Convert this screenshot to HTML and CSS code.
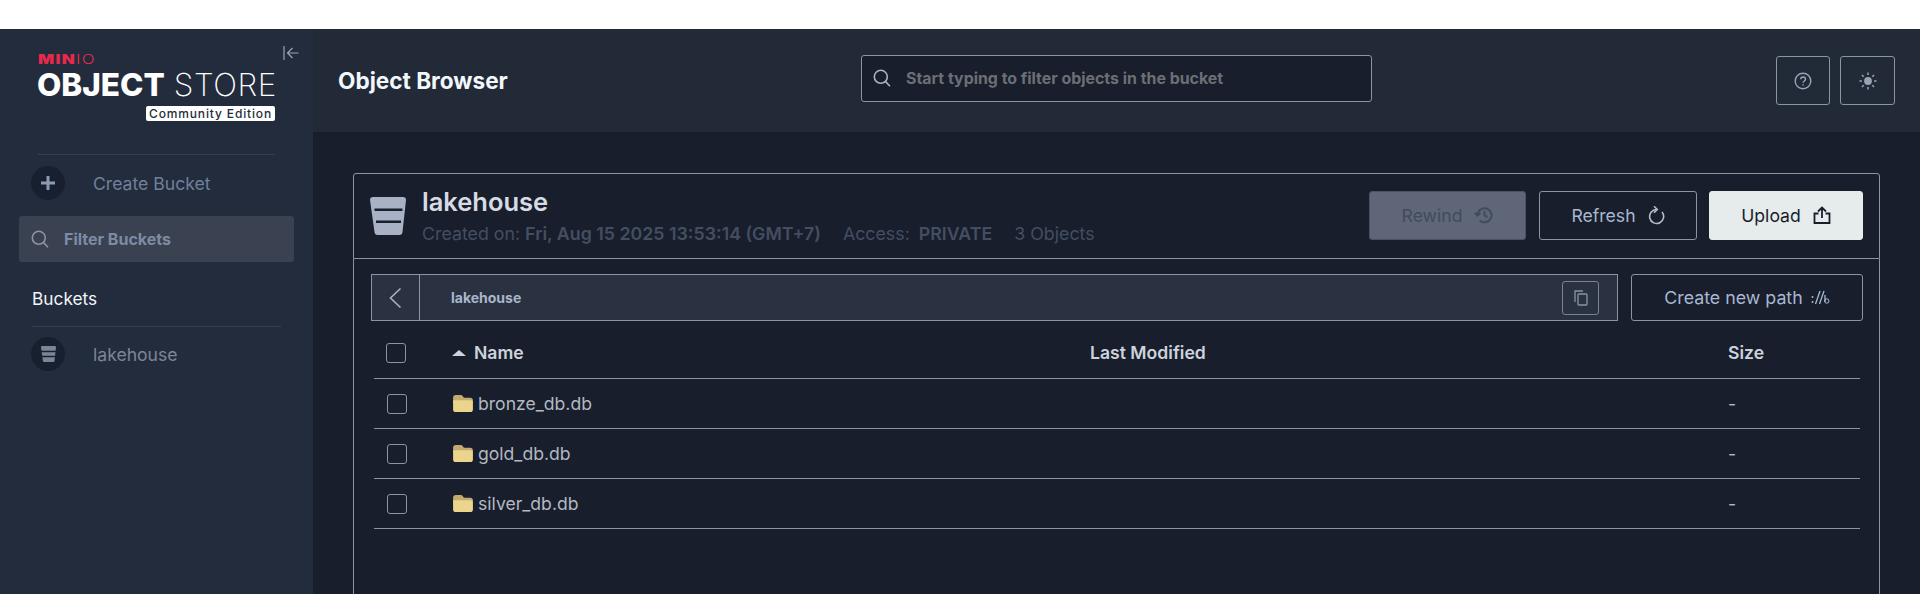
FILE: index.html
```html
<!DOCTYPE html>
<html lang="en">
<head>
    <meta charset="UTF-8">
    <meta name="viewport" content="width=device-width, initial-scale=1.0">
    <title>Object Browser</title>
    <link rel="stylesheet" href="styles.css">
</head>
<body>
    <div class="top-strip"></div>
    <div class="app">
        <aside class="sidebar">
            <button class="collapse" aria-label="Collapse">
                <svg width="16" height="16" viewBox="0 0 16 16" fill="none" stroke="#9ba3b2" stroke-width="1.2"><path d="M1 1v14"/><path d="M15.500 8H4.500M9.500 3l-5 5 5 5"/></svg>
            </button>
            <div class="logo">
                <div class="logo-minio"><b>MIN</b>IO</div>
                <div class="logo-name"><b>OBJECT</b> <span class="logo-store">STORE</span></div>
                <div class="logo-edition"><span>Community Edition</span></div>
            </div>
            <div class="side-row side-row-create">
                <span class="side-circle">
                    <svg width="16" height="16" viewBox="0 0 16 16" fill="none" stroke="#8e9ab0" stroke-width="3"><path d="M8 1v14M1 8h14"/></svg>
                </span>
                <span class="side-label side-label-create">Create Bucket</span>
            </div>
            <div class="filter-box">
                <svg width="18" height="18" viewBox="0 0 18 18" fill="none" stroke="#8c94a3" stroke-width="1.600"><circle cx="7.800" cy="7.800" r="6.500"/><path d="M12.600 12.600l4.400 4.600"/></svg>
                <span>Filter Buckets</span>
            </div>
            <div class="buckets-title">Buckets</div>
            <div class="side-row side-row-bucket">
                <span class="side-circle">
                    <svg width="15" height="16" viewBox="0 0 36 38"><path fill="#7c8598" d="M0 3q0-3 3-3h30q3 0 3 3l-3.500 32q-.3 3-3 3H7.500q-2.700 0-3-3z"/><path fill="#182030" d="M0 11h36v3.500H0zM0 23h36v3.500H0z"/></svg>
                </span>
                <span class="side-label">lakehouse</span>
            </div>
        </aside>

        <div class="main">
            <header class="topbar">
                <h1 class="page-title">Object Browser</h1>
                <div class="search">
                    <svg width="18" height="18" viewBox="0 0 18 18" fill="none" stroke="#a9b3c4" stroke-width="1.600"><circle cx="7.800" cy="7.800" r="6.500"/><path d="M12.600 12.600l4.400 4.600"/></svg>
                    <span>Start typing to filter objects in the bucket</span>
                </div>
                <div class="top-actions">
                    <button class="icon-btn icon-btn-help" aria-label="Help">
                        <svg width="18" height="18" viewBox="0 0 18 18" fill="none" stroke="#98a3b5" stroke-width="1.400"><circle cx="9" cy="9" r="7.800"/><path d="M6.700 7.200c0-3 4.800-3 4.800 0 0 1.800-2.400 1.800-2.400 3.600"/><path d="M9.100 12.200v1.400"/></svg>
                    </button>
                    <button class="icon-btn icon-btn-theme" aria-label="Theme">
                        <svg width="18" height="18" viewBox="0 0 18 18" fill="#98a3b5" stroke="#98a3b5" stroke-width="1.500"><circle cx="9" cy="9" r="3.900" stroke="none"/><path d="M9 .5v2.400M9 15.100v2.400M.5 9h2.400M15.100 9h2.400M3 3l1.700 1.700M13.300 13.300L15 15M3 15l1.700-1.700M13.300 4.700L15 3"/></svg>
                    </button>
                </div>
            </header>

            <div class="content">
                <section class="panel-head">
                    <svg class="bucket-icon" width="36" height="38" viewBox="0 0 36 38"><path fill="#a9b2c4" d="M0 3q0-3 3-3h30q3 0 3 3l-3.500 32q-.3 3-3 3H7.500q-2.700 0-3-3z"/><path fill="#181e2b" d="M4.500 11.500h28v2.500h-28zM6 23.500h25v2.500H6z"/></svg>
                    <div class="bucket-info">
                        <div class="bucket-name">lakehouse</div>
                        <div class="bucket-meta">
                            <span>Created on: <b>Fri, Aug 15 2025 13:53:14 (GMT+7)</b></span>
                            <span>Access: <b class="access">PRIVATE</b></span>
                            <span>3 Objects</span>
                        </div>
                    </div>
                    <div class="head-actions">
                        <button class="btn btn-disabled btn-rewind">Rewind
                            <svg width="19" height="18" viewBox="0 0 19 18" fill="none" stroke="#414b5d" stroke-width="2"><path d="M3.500 9a7 7 0 1 1 2.200 5.400"/><path d="M.8 6.800l2.700 2.900 2.900-2.700"/><path d="M10.500 5v4.500l3 1.500"/></svg>
                        </button>
                        <button class="btn btn-outline btn-refresh">Refresh
                            <svg width="17" height="20" viewBox="0 0 17 20" fill="none" stroke="#b4bccb" stroke-width="1.600"><path d="M14 7A7 7 0 1 1 8.500 4.500"/><path d="M6 1.200L9.300 4.500 6 7.800"/></svg>
                        </button>
                        <button class="btn btn-light btn-upload">Upload
                            <svg width="18" height="18" viewBox="0 0 18 18" fill="none" stroke="#181e2b" stroke-width="1.800"><path d="M9 12V2M5 5.500L9 1.500l4 4"/><path d="M5.500 7.500H1.500v9.500h15V7.500h-4"/></svg>
                        </button>
                    </div>
                </section>

                <section class="panel-body">
                    <div class="path-row">
                        <div class="path-bar">
                            <span class="path-back">
                                <svg width="14" height="22" viewBox="0 0 14 22" fill="none" stroke="#aab2c2" stroke-width="1.600"><path d="M11.500 1.500L1.500 11l10 9.500"/></svg>
                            </span>
                            <span class="path-name">lakehouse</span>
                            <span class="path-copy">
                                <svg width="14" height="16" viewBox="0 0 14 16" fill="none" stroke="#8a94a6" stroke-width="1.300"><path d="M1 12V1h8"/><rect x="4" y="4" width="9" height="11" rx="1"/></svg>
                            </span>
                        </div>
                        <button class="btn btn-outline btn-path">Create new path
                            <svg width="19" height="15" viewBox="0 0 19 15" fill="none" stroke="#a9b8d2" stroke-width="1.300"><circle cx="1.500" cy="7" r="1" fill="#a9b8d2" stroke="none"/><circle cx="1.500" cy="12" r="1" fill="#a9b8d2" stroke="none"/><path d="M4.500 14L9 1M8.500 14L13 1"/><path d="M14 5v7"/><circle cx="15.800" cy="11" r="2.200" stroke-width="1"/></svg>
                        </button>
                    </div>

                    <div class="table">
                        <div class="table-row table-head">
                            <span class="check check-head"></span>
                            <span class="col-name"><i class="sort-arrow"></i>Name</span>
                            <span>Last Modified</span>
                            <span>Size</span>
                        </div>
                        <div class="table-row">
                            <span class="check"></span>
                            <span class="col-name"><svg class="folder" width="20" height="17" viewBox="0 0 21 18"><path fill="#c2ab70" d="M0 3q0-3 3-3h5q1.500 0 2.500 1.500L11.500 3H18q3 0 3 3v2H0z"/><path fill="#ebd48c" d="M0 5.500h18q3 0 3 2.500v7q0 3-3 3H3q-3 0-3-3z"/></svg>bronze_db.db</span>
                            <span></span>
                            <span>-</span>
                        </div>
                        <div class="table-row">
                            <span class="check"></span>
                            <span class="col-name"><svg class="folder" width="20" height="17" viewBox="0 0 21 18"><path fill="#c2ab70" d="M0 3q0-3 3-3h5q1.500 0 2.500 1.500L11.500 3H18q3 0 3 3v2H0z"/><path fill="#ebd48c" d="M0 5.500h18q3 0 3 2.500v7q0 3-3 3H3q-3 0-3-3z"/></svg>gold_db.db</span>
                            <span></span>
                            <span>-</span>
                        </div>
                        <div class="table-row">
                            <span class="check"></span>
                            <span class="col-name"><svg class="folder" width="20" height="17" viewBox="0 0 21 18"><path fill="#c2ab70" d="M0 3q0-3 3-3h5q1.500 0 2.500 1.500L11.500 3H18q3 0 3 3v2H0z"/><path fill="#ebd48c" d="M0 5.500h18q3 0 3 2.500v7q0 3-3 3H3q-3 0-3-3z"/></svg>silver_db.db</span>
                            <span></span>
                            <span>-</span>
                        </div>
                    </div>
                </section>
            </div>
        </div>
    </div>
</body>
</html>
```
FILE: styles.css
```css
* {
    box-sizing: border-box;
}

html, body {
    height: 100%;
    overflow: hidden;
}

body {
    margin: 0;
    background-color: #fff;
    font-family: Inter, "Liberation Sans", sans-serif;
}

button {
    font-family: inherit;
    cursor: pointer;
}

.top-strip {
    height: 29px;
    background-color: #fff;
}

.app {
    display: flex;
    height: 565px;
    overflow: hidden;
}

/* sidebar */
.sidebar {
    position: relative;
    flex: 0 0 313px;
    min-width: 0;
    background-color: #232c3d;
    padding-top: 25px;
}

.collapse {
    position: absolute;
    top: 16px;
    left: 283px;
    padding: 0;
    border: none;
    background: none;
    line-height: 0;
}

.logo {
    margin: 0 38px;
    height: 101px;
    border-bottom: 1px solid #363f50;
}

.logo-minio {
    font-size: 13px;
    line-height: 11px;
    letter-spacing: 1px;
    font-weight: 300;
    color: #e8294c;
    transform: scaleX(1.3);
    transform-origin: left;
}

.logo-minio b {
    font-weight: 900;
}

.logo-name {
    margin: 6px 0 0 -1px;
    font-size: 31.500px;
    line-height: 28px;
    font-weight: 200;
    color: #fff;
    white-space: nowrap;
}

.logo-name b {
    font-weight: 800;
}

.logo-store {
    letter-spacing: 0.6px;
}

.logo-edition {
    display: flex;
    justify-content: flex-end;
    margin-top: 7px;
}

.logo-edition span {
    padding: 0 3px;
    background-color: #fff;
    border-radius: 2px;
    color: #232c3d;
    font-size: 12px;
    line-height: 15px;
    font-weight: 500;
    letter-spacing: 0.85px;
    white-space: nowrap;
}

.side-row {
    display: flex;
    align-items: center;
    gap: 28px;
    margin: 11px 0 0 31px;
}

.side-row-bucket {
    margin-top: 10px;
}

.side-circle {
    display: flex;
    align-items: center;
    justify-content: center;
    width: 34px;
    height: 34px;
    border-radius: 50%;
    background-color: #182030;
}

.side-label {
    font-size: 17.600px;
    color: #7d8594;
}

.side-label-create {
    color: #71809a;
}

.filter-box {
    display: flex;
    align-items: center;
    gap: 15px;
    margin: 16px 19px 0;
    height: 46px;
    padding-left: 12px;
    background-color: #3a4251;
    border-radius: 3px;
    color: #7d8ba4;
    font-size: 16px;
    font-weight: 700;
}

.buckets-title {
    margin: 26px 32px 0 32px;
    padding: 0 0 17px;
    border-bottom: 1px solid #363f50;
    color: #f2f5f9;
    font-size: 17.300px;
    line-height: 21px;
}

/* top bar */
.main {
    flex: 1;
    min-width: 0;
    background-color: #181e2b;
}

.topbar {
    display: flex;
    align-items: center;
    height: 103px;
    padding: 0 0 0 25px;
    background-color: #222a38;
}

.page-title {
    width: 523px;
    margin: 0;
    color: #f2f7fb;
    font-size: 22.600px;
    font-weight: 700;
}

.search {
    display: flex;
    align-items: center;
    gap: 15px;
    width: 511px;
    height: 47px;
    margin-bottom: 4px;
    padding: 0 0 1px 11px;
    background-color: #181e2b;
    border: 1px solid #8b94a5;
    border-radius: 3px;
    color: #6c6f75;
    font-size: 15.900px;
    font-weight: 700;
}

.top-actions {
    display: flex;
    gap: 10px;
    margin-left: 404px;
}

.icon-btn {
    display: flex;
    align-items: center;
    justify-content: center;
    width: 54px;
    height: 49px;
    padding: 0;
    background: none;
    border: 1px solid #8b94a5;
    border-radius: 3px;
}

.icon-btn-theme {
    width: 55px;
}

/* panel */
.content {
    padding: 41px 40px 0;
}

.panel-head {
    display: flex;
    align-items: center;
    height: 86px;
    padding: 0 16px;
    border: 1px solid #8b94a5;
    border-radius: 3px 3px 0 0;
}

.bucket-info {
    margin: 0 0 2px 16px;
}

.bucket-name {
    color: #d6dbe4;
    font-size: 25.500px;
    line-height: 30px;
    font-weight: 600;
}

.bucket-meta {
    display: flex;
    gap: 22px;
    margin-top: 6px;
    color: #434e62;
    font-size: 17.800px;
    line-height: 21px;
    white-space: nowrap;
}

.bucket-meta b {
    font-weight: 600;
}

.access {
    margin-left: 4px;
}

.head-actions {
    display: flex;
    gap: 12px;
    margin-left: auto;
    margin-bottom: 2px;
}

.btn {
    display: flex;
    align-items: center;
    justify-content: center;
    gap: 12px;
    height: 49px;
    padding: 0;
    font-size: 17.600px;
    border-radius: 3px;
    white-space: nowrap;
}

.btn-disabled {
    background-color: #5e6677;
    border: 1px solid #4a5263;
    color: #414b5d;
    cursor: default;
}

.btn-rewind {
    width: 157px;
    margin-right: 1px;
}

.btn-outline {
    background: none;
    border: 1px solid #8b94a5;
    color: #a9b8d2;
}

.btn-refresh {
    width: 158px;
}

.btn-light {
    background-color: #e6ebeb;
    border: 1px solid #e6ebeb;
    color: #181e2b;
}

.btn-upload {
    width: 154px;
}

.panel-body {
    height: 340px;
    padding: 15px 16px 0 17px;
    border: 1px solid #8b94a5;
    border-top: none;
}

.path-row {
    display: flex;
    gap: 13px;
}

.path-bar {
    display: flex;
    align-items: center;
    flex: 1;
    height: 47px;
    background-color: #2a3241;
    border: 1px solid #8b94a5;
}

.path-back {
    display: flex;
    align-items: center;
    justify-content: center;
    width: 48px;
    height: 100%;
    border-right: 1px solid #8b94a5;
}

.path-name {
    margin-left: 31px;
    color: #a9b5cb;
    font-size: 14px;
    font-weight: 700;
}

.path-copy {
    display: flex;
    align-items: center;
    justify-content: center;
    width: 37px;
    height: 34px;
    margin-left: auto;
    margin-right: 18px;
    border: 1px solid #7a8394;
    border-radius: 3px;
}

.btn-path {
    width: 232px;
    height: 47px;
    gap: 8px;
    font-size: 17.800px;
}

.table {
    margin: 0 3px;
}

.table-row {
    display: grid;
    grid-template-columns: 78px 638px 638px 1fr;
    align-items: center;
    height: 50px;
    border-bottom: 1px solid #8b94a5;
    color: #b3b8c2;
    font-size: 17.600px;
}

.table-head {
    height: 58px;
    padding-top: 6px;
    color: #cdd3dd;
    font-weight: 600;
    font-size: 17.600px;
}

.check {
    display: block;
    width: 20px;
    height: 20px;
    margin-left: 13px;
    border: 1px solid #8b94a5;
    border-radius: 3px;
}

.check-head {
    margin-left: 12px;
}

.col-name {
    display: flex;
    align-items: center;
}

.folder {
    margin: 0 5px 0 1px;
}

.sort-arrow {
    width: 0;
    height: 0;
    margin-right: 8px;
    border-left: 7px solid transparent;
    border-right: 7px solid transparent;
    border-bottom: 6px solid #cdd3dd;
}
```
